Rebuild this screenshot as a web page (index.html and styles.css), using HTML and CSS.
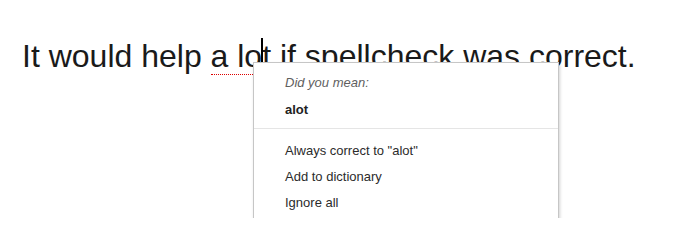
FILE: index.html
```html
<!DOCTYPE html>
<html>
<head>
<meta charset="utf-8">
<link rel="stylesheet" href="styles.css">
</head>
<body>
<div class="doc">
  <p class="line">It would help <span class="misspelled">a lo<span class="caret"></span>t</span> if spellcheck was correct.</p>
  <div class="menu">
    <div class="group">
      <div class="item hint">Did you mean:</div>
      <div class="item suggestion">alot</div>
    </div>
    <div class="divider"></div>
    <div class="group lower">
      <div class="item">Always correct to "alot"</div>
      <div class="item">Add to dictionary</div>
      <div class="item">Ignore all</div>
    </div>
  </div>
</div>
</body>
</html>
```

FILE: styles.css
```css
html, body {
  margin: 0;
  padding: 0;
  background: #fff;
}
.doc {
  position: relative;
  width: 679px;
  height: 218px;
  overflow: hidden;
}
.line {
  margin: 0;
  padding: 36px 0 0 22px;
  font-family: "Liberation Sans", Arial, sans-serif;
  font-size: 32px;
  line-height: 40px;
  color: #1a1a1a;
  white-space: nowrap;
}
.misspelled {
  border-bottom: 1px dotted #d00;
}
.caret {
  position: relative;
}
.caret::before {
  content: "";
  position: absolute;
  left: -1px;
  top: 0;
  width: 2px;
  height: 28px;
  background: #000;
}
.menu {
  position: absolute;
  left: 253px;
  top: 62px;
  width: 306px;
  height: 200px;
  background: #fff;
  border: 1px solid #c6c6c6;
  box-shadow: 1px 2px 3px rgba(0, 0, 0, 0.18);
  font-family: "Liberation Sans", Arial, sans-serif;
  font-size: 13px;
  color: #2b2b2b;
  padding-top: 7px;
  box-sizing: border-box;
}
.item {
  padding-left: 31px;
  line-height: 26px;
  height: 26px;
}
.hint {
  font-style: italic;
  color: #5f5f5f;
  height: 27px;
}
.suggestion {
  font-weight: bold;
  color: #222;
}
.divider {
  height: 1px;
  background: #e5e5e5;
  margin: 5px 0 9px 0;
}
```
